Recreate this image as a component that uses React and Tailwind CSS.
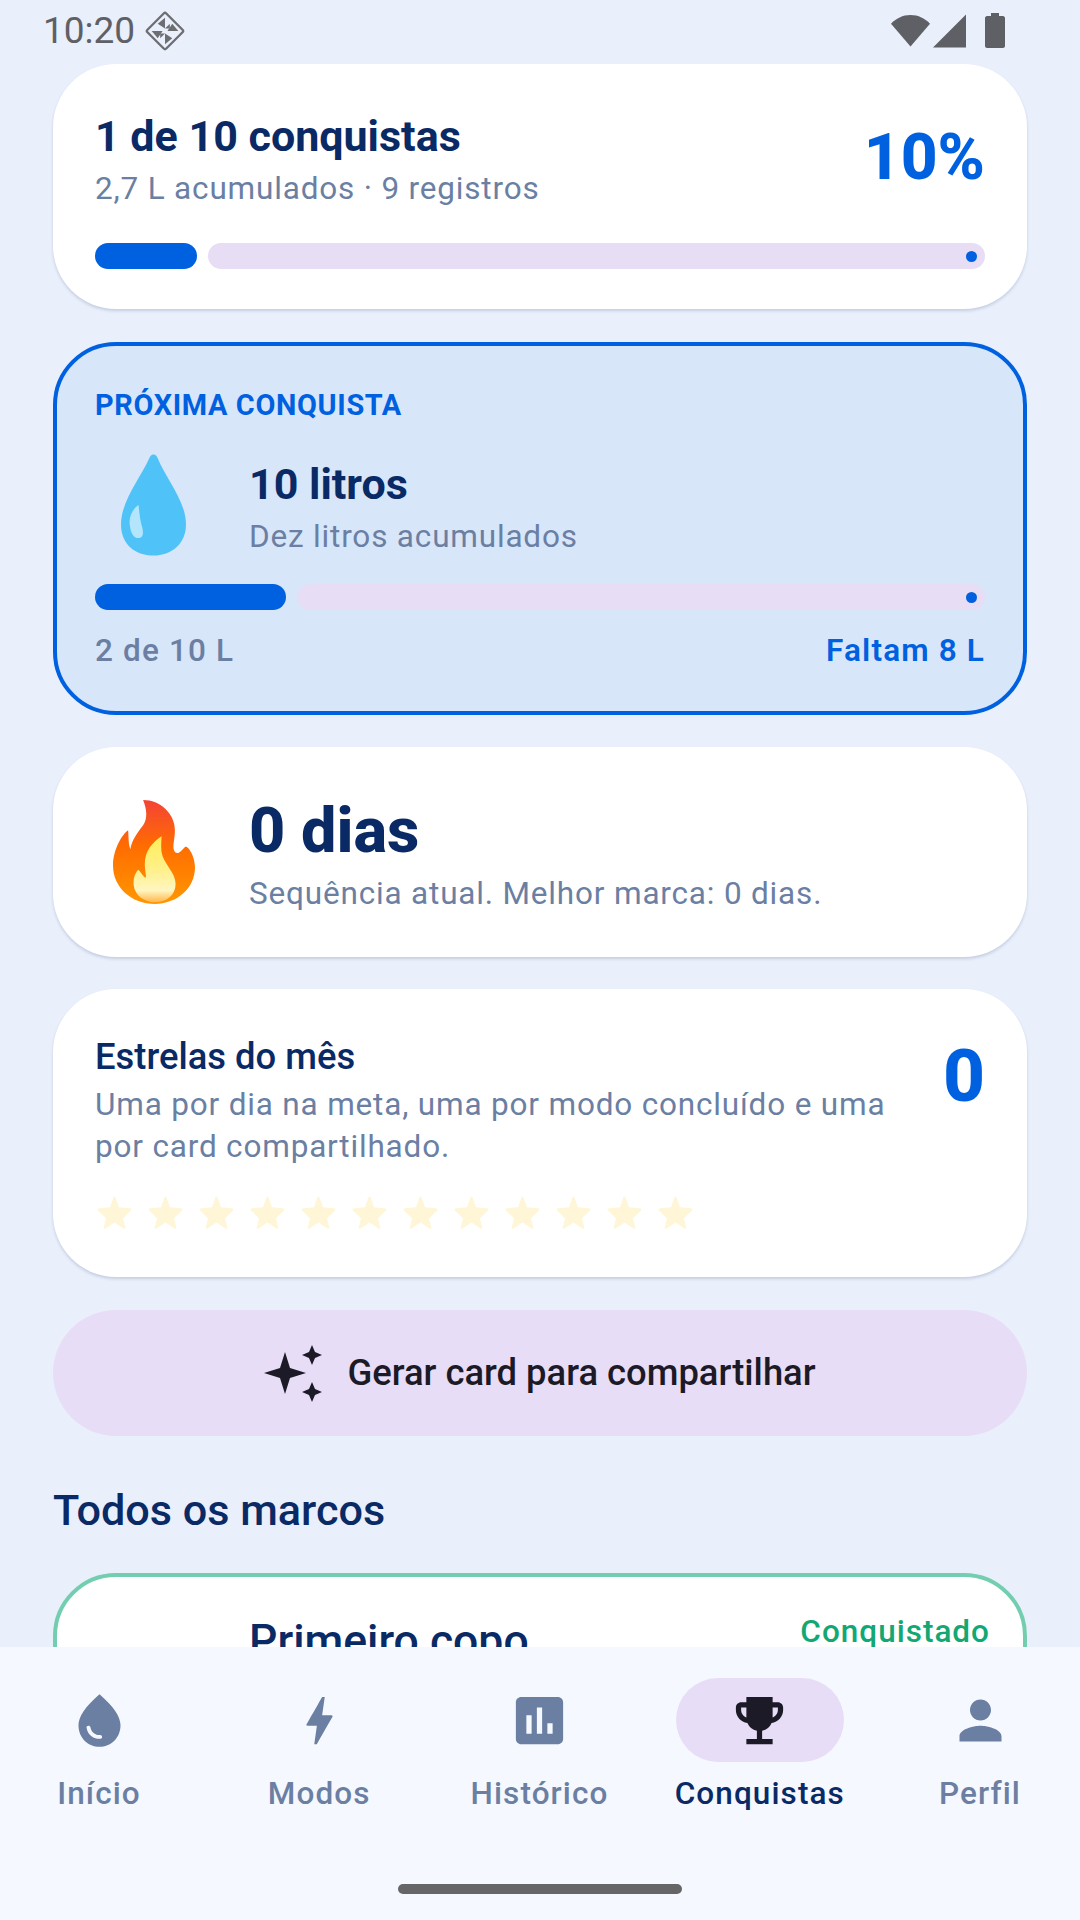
import React from "react";
import { MdWaterDrop, MdBolt, MdAssessment, MdEmojiEvents, MdPerson } from "react-icons/md";

function Diamond() {
  return (
    <svg width="46" height="46" viewBox="0 0 38 38" className="ml-[7px]">
      <rect x="8" y="8" width="22" height="22" rx="1.5" transform="rotate(45 19 19)" fill="none" stroke="#6d6e72" strokeWidth="1.9" />
      <g fill="#6d6e72">
        <polygon points="19,8 19,17 13,13" />
        <polygon points="19,30 19,21 25,25" />
        <polygon points="8,19 17,19 13,25" />
        <polygon points="30,19 21,19 25,13" />
        <polygon points="19,17 23,13 23,17" />
        <polygon points="19,21 15,25 15,21" />
      </g>
    </svg>
  );
}

function StatusBar() {
  return (
    <div className="h-[64px] shrink-0 flex items-center justify-between pl-[43px] pr-[75px]">
      <div className="flex items-center text-[37px] leading-[40px] text-[#5f6065] -mt-[3px]">
        <span>10:20</span>
        <Diamond />
      </div>
      <div className="flex items-center gap-[3px] -mt-[3px]">
        <svg width="39" height="34" viewBox="0 0 40 34">
          <path d="M20 33 L0 9.5 C5 4 12 0.5 20 0.5 C28 0.5 35 4 40 9.5Z" fill="#5f6065" />
        </svg>
        <svg width="33" height="34" viewBox="0 0 33 34">
          <path d="M33 0.5 V33.5 H0Z" fill="#5f6065" />
        </svg>
        <svg width="20" height="35" viewBox="0 0 20 35" className="ml-[16px]">
          <path d="M6 0 H14 V3 H18 C19 3 20 4 20 5 V33 C20 34 19 35 18 35 H2 C1 35 0 34 0 33 V5 C0 4 1 3 2 3 H6Z" fill="#5f6065" />
        </svg>
      </div>
    </div>
  );
}

function Progress({ fill }) {
  return (
    <div className="flex gap-[11px] h-[26px]">
      <div className={`h-full rounded-full bg-[#0061e0] ${fill}`} />
      <div className="flex-1 h-full rounded-full bg-[#e7ddf5] flex items-center justify-end pr-[8px]">
        <div className="w-[11px] h-[11px] rounded-full bg-[#0061e0]" />
      </div>
    </div>
  );
}

function Drop() {
  return (
    <svg width="65" height="104" viewBox="0 0 67 104" className="-mt-[2px]">
      <path d="M33.5 0C36 0 37 2 38 4C46 24 67 48 67 72C67 92 52 104 33.5 104C14 104 0 92 0 72C0 48 20 24 29 4C30 2 31 0 33.5 0Z" fill="#4fc3f7" />
      <path d="M18 52C12 56 8 64 9 72C10 82 14 87 19 86C24 85 23 78 21 72C19 64 19 58 18 52Z" fill="#b3e5fc" />
    </svg>
  );
}

function Flame() {
  return (
    <svg width="82" height="104" viewBox="0 0 245 310">
      <defs>
        <linearGradient id="fo" x1="0" y1="0" x2="0" y2="1">
          <stop offset="0" stopColor="#f44336" />
          <stop offset="0.45" stopColor="#ff6d00" />
          <stop offset="1" stopColor="#ff9800" />
        </linearGradient>
        <linearGradient id="fi" x1="0" y1="0" x2="0" y2="1">
          <stop offset="0" stopColor="#ffee58" />
          <stop offset="0.5" stopColor="#fff08a" />
          <stop offset="0.82" stopColor="#fff6c0" />
          <stop offset="1" stopColor="#ffb74d" />
        </linearGradient>
      </defs>
      <path d="M90 0C140 0 185 40 185 90C185 120 175 140 185 155C195 165 205 150 215 140C225 135 245 170 245 200C245 265 190 310 125 310C55 310 0 260 0 195C0 150 25 105 45 90C47 100 45 130 52 147C55 120 75 95 90 75C105 55 100 25 90 0Z" fill="url(#fo)" />
      <path d="M145 108C120 125 95 150 95 190C95 210 100 225 98 232C90 230 85 215 75 208C65 220 60 235 62 255C65 285 95 305 125 305C160 305 187 285 187 250C187 215 150 190 145 155C143 135 145 120 145 108Z" fill="url(#fi)" />
    </svg>
  );
}

function Star() {
  return (
    <svg width="35" height="33" viewBox="0 0 35 33" className="shrink-0">
      <path d="M17.5 0.5C18 0.5 18.4 1 18.6 1.5L22 11.2L33 12.2C34.7 12.4 35 13.5 34 14.5L26 22.2L28.2 31.5C28.5 32.8 27.6 33.2 26.5 32.5L17.5 26.5L8.5 32.5C7.4 33.2 6.5 32.8 6.8 31.5L9 22.2L1 14.5C0 13.5 0.3 12.4 2 12.2L13 11.2L16.4 1.5C16.6 1 17 0.5 17.5 0.5Z" fill="#fff6d8" />
    </svg>
  );
}

function Sparkles() {
  return (
    <svg width="58" height="57" viewBox="0 0 58 57" className="shrink-0">
      <g fill="#1d1a28">
        <path d="M21 7L26 23L42 28L26 33L21 49L16 33L0 28L16 23Z" />
        <path d="M48 0L51 7L58 10L51 13L48 20L45 13L38 10L45 7Z" />
        <path d="M48 37L51 44L58 47L51 50L48 57L45 50L38 47L45 44Z" />
      </g>
    </svg>
  );
}

const cardShadow = "shadow-[0_2px_3px_rgba(40,60,110,0.18)]";

function NavItem({ label, Icon, active }) {
  return (
    <div className="w-[168px] flex flex-col items-center">
      <div className={`w-[168px] h-[84px] rounded-full flex items-center justify-center ${active ? "bg-[#e8ddf6]" : ""}`}>
        <Icon size={63} color={active ? "#1d1a28" : "#6b7fa3"} />
      </div>
      <div className={`mt-[11px] text-[31.5px] leading-[42px] tracking-[1.1px] whitespace-nowrap ${active ? "font-medium text-[#0a2a66]" : "font-[480] text-[#6b7fa3]"}`}>
        {label}
      </div>
    </div>
  );
}

export default function App() {
  return (
    <div className="w-[1080px] h-[1920px] bg-[#e9effb] flex flex-col overflow-hidden font-['Roboto',sans-serif]">
      <StatusBar />
      <div className="flex-1 overflow-hidden px-[53px] flex flex-col">
        <div className={`bg-white rounded-[63px] px-[42px] pt-[42px] pb-[40px] shrink-0 ${cardShadow}`}>
          <div className="flex items-center justify-between mb-[33px]">
            <div>
              <div className="text-[43px] leading-[60px] font-bold text-[#0a2a66] mb-[2px]">1 de 10 conquistas</div>
              <div className="text-[31.5px] leading-[42px] tracking-[0.82px] text-[#6b7fa3]">2,7 L acumulados · 9 registros</div>
            </div>
            <div className="text-[64px] leading-[84px] font-extrabold text-[#0061e0]">10%</div>
          </div>
          <Progress fill="w-[102px]" />
        </div>

        <div className="mt-[33px] bg-[#d8e6fa] border-[4px] border-[#0061e0] rounded-[63px] px-[38px] pt-[39px] pb-[40px] shrink-0">
          <div className="text-[28.9px] leading-[40px] font-bold tracking-[0.65px] text-[#0061e0]">PRÓXIMA CONQUISTA</div>
          <div className="flex items-center mt-[29px] mb-[26px]">
            <div className="w-[117px] mr-[37px] flex justify-center">
              <Drop />
            </div>
            <div>
              <div className="text-[43px] leading-[61px] font-bold text-[#0a2a66]">10 litros</div>
              <div className="text-[31.5px] leading-[43px] tracking-[0.82px] text-[#6b7fa3]">Dez litros acumulados</div>
            </div>
          </div>
          <Progress fill="w-[191px]" />
          <div className="flex justify-between mt-[21px] text-[31.5px] leading-[40px] font-medium tracking-[1.15px]">
            <span className="text-[#6b7fa3]">2 de 10 L</span>
            <span className="text-[#0061e0] font-semibold">Faltam 8 L</span>
          </div>
        </div>

        <div className={`mt-[32px] bg-white rounded-[63px] px-[42px] pt-[42px] pb-[42px] flex items-center shrink-0 ${cardShadow}`}>
          <div className="w-[117px] mr-[37px] flex justify-center">
            <Flame />
          </div>
          <div>
            <div className="text-[63px] leading-[84px] font-extrabold text-[#0a2a66]">0 dias</div>
            <div className="text-[31.5px] leading-[42px] tracking-[0.82px] text-[#6b7fa3]">Sequência atual. Melhor marca: 0 dias.</div>
          </div>
        </div>

        <div className={`mt-[32px] bg-white rounded-[63px] px-[42px] pt-[41px] pb-[48px] shrink-0 ${cardShadow}`}>
          <div className="flex justify-between items-start">
            <div className="w-[800px]">
              <div className="text-[36.4px] leading-[54px] font-medium text-[#0a2a66]">Estrelas do mês</div>
              <div className="text-[31.5px] leading-[42px] tracking-[0.82px] text-[#6b7fa3]">Uma por dia na meta, uma por modo concluído e uma por card compartilhado.</div>
            </div>
            <div className="text-[73px] leading-[92px] font-extrabold text-[#0061e0]">0</div>
          </div>
          <div className="flex gap-[16px] pl-[2px] mt-[27px] h-[34px] items-center">
            {Array.from({ length: 12 }).map((_, i) => <Star key={i} />)}
          </div>
        </div>

        <div className="mt-[33px] h-[126px] rounded-full bg-[#e8ddf6] flex items-center justify-center gap-[25px] shrink-0">
          <Sparkles />
          <span className="text-[36.4px] font-medium text-[#1d1a28]">Gerar card para compartilhar</span>
        </div>

        <div className="mt-[45px] text-[43.2px] leading-[60px] font-medium text-[#0a2a66] shrink-0">Todos os marcos</div>

        <div className="mt-[32px] bg-white border-[4px] border-[#72ceae] rounded-[63px] pl-[192px] pr-[33px] pt-[34px] h-[300px] flex items-start justify-between shrink-0">
          <div className="text-[44.5px] leading-[60px] font-medium text-[#0a2a66]">Primeiro copo</div>
          <div className="text-[31.5px] leading-[42px] font-medium tracking-[1px] text-[#12a874]">Conquistado</div>
        </div>
      </div>

      <div className="h-[273px] shrink-0 bg-[#f5f8ff] flex flex-col pt-[31px] relative z-10">
        <div className="flex justify-between pl-[15px] pr-[16px]">
          <NavItem label="Início" Icon={MdWaterDrop} />
          <NavItem label="Modos" Icon={MdBolt} />
          <NavItem label="Histórico" Icon={MdAssessment} />
          <NavItem label="Conquistas" Icon={MdEmojiEvents} active />
          <NavItem label="Perfil" Icon={MdPerson} />
        </div>
        <div className="mt-[69px] mx-auto w-[284px] h-[10px] rounded-full bg-[#666666]" />
      </div>
    </div>
  );
}
